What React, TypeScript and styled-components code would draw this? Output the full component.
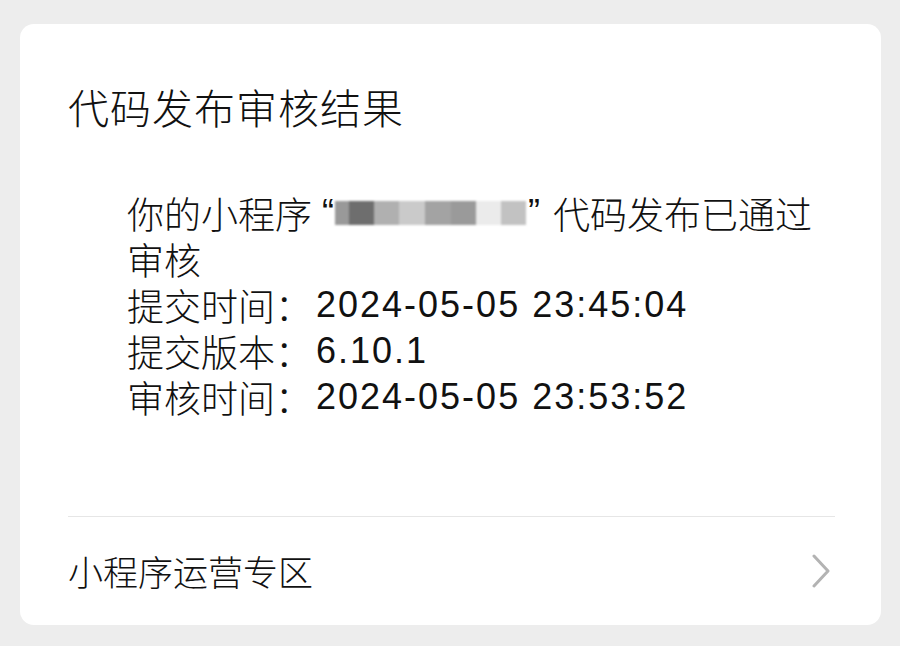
import { FC } from 'react';
import styled, { createGlobalStyle } from 'styled-components';

const GlobalStyle = createGlobalStyle`
    html, body {
        margin: 0;
        padding: 0;
        background: #ededed;
    }
    body {
        font-family: "Noto Sans CJK SC", "Noto Sans", sans-serif;
        color: #111111;
    }
`;

const blurShades = [
    { w: 14, c: '#999999' },
    { w: 25, c: '#6e6e6e' },
    { w: 25, c: '#b0b0b0' },
    { w: 26, c: '#cacaca' },
    { w: 26, c: '#a3a3a3' },
    { w: 25, c: '#9a9a9a' },
    { w: 25, c: '#ebebeb' },
    { w: 25, c: '#c2c2c2' },
];

const infoRows = [
    { label: '提交时间', value: '2024-05-05 23:45:04' },
    { label: '提交版本', value: '6.10.1' },
    { label: '审核时间', value: '2024-05-05 23:53:52' },
];

const App: FC = () => {
    return (
        <Page>
            <GlobalStyle />
            <Card>
                <Title>代码发布审核结果</Title>
                <Body>
                    <Line>
                        你的小程序<Quote $side="open">“</Quote>
                        <Masked>
                            {blurShades.map((b, i) => (
                                <Block key={i} $w={b.w} $c={b.c} />
                            ))}
                        </Masked>
                        <Quote $side="close">”</Quote>代码发布已通过
                    </Line>
                    <Line>审核</Line>
                    {infoRows.map(row => (
                        <Line key={row.label}>
                            {row.label}：<Value>{row.value}</Value>
                        </Line>
                    ))}
                </Body>
                <Divider />
                <Footer>
                    <FooterText>小程序运营专区</FooterText>
                    <Chevron width="20" height="34" viewBox="0 0 20 34">
                        <polyline points="3,2 17,17 3,32" fill="none" stroke="#b3b3b3" strokeWidth="3" strokeLinecap="round" strokeLinejoin="round" />
                    </Chevron>
                </Footer>
            </Card>
        </Page>
    );
};

const Page = styled.div`
    width: 900px;
    height: 646px;
    padding: 24px 19px 21px 20px;
    box-sizing: border-box;
`;

const Card = styled.div`
    background: #ffffff;
    border-radius: 14px;
    height: 601px;
    padding: 54px 46px 0 48px;
    box-sizing: border-box;
    display: flex;
    flex-direction: column;
`;

const Title = styled.h1`
    margin: 0;
    font-size: 41px;
    font-weight: 300;
    line-height: 56px;
    letter-spacing: 1px;
`;

const Body = styled.div`
    margin: 56px 0 0 59px;
    font-size: 37px;
    font-weight: 300;
    line-height: 46px;
`;

const Line = styled.div`
    display: flex;
    align-items: center;
    white-space: nowrap;
`;

const Quote = styled.span<{ $side: 'open' | 'close' }>`
    font-family: "Liberation Sans", Arial, sans-serif;
    font-size: 36px;
    margin: ${p => (p.$side === 'open' ? '0 1px 0 10px' : '0 13px 0 2px')};
`;

const Masked = styled.span`
    display: inline-flex;
    height: 24px;
    filter: blur(0.8px);
`;

const Block = styled.span<{ $w: number; $c: string }>`
    width: ${p => p.$w}px;
    height: 100%;
    background: ${p => p.$c};
`;

const Value = styled.span`
    margin-left: 4px;
    font-family: "Liberation Sans", Arial, sans-serif;
    font-size: 36px;
    font-weight: 400;
    letter-spacing: 2px;
`;

const Divider = styled.div`
    margin-top: 96px;
    height: 1px;
    background: #e6e6e6;
`;

const Footer = styled.div`
    flex: 1;
    display: flex;
    align-items: center;
    justify-content: space-between;
`;

const FooterText = styled.span`
    font-size: 35px;
    font-weight: 300;
    line-height: 46px;
`;

const Chevron = styled.svg`
    margin-right: 4px;
`;

export default App;
